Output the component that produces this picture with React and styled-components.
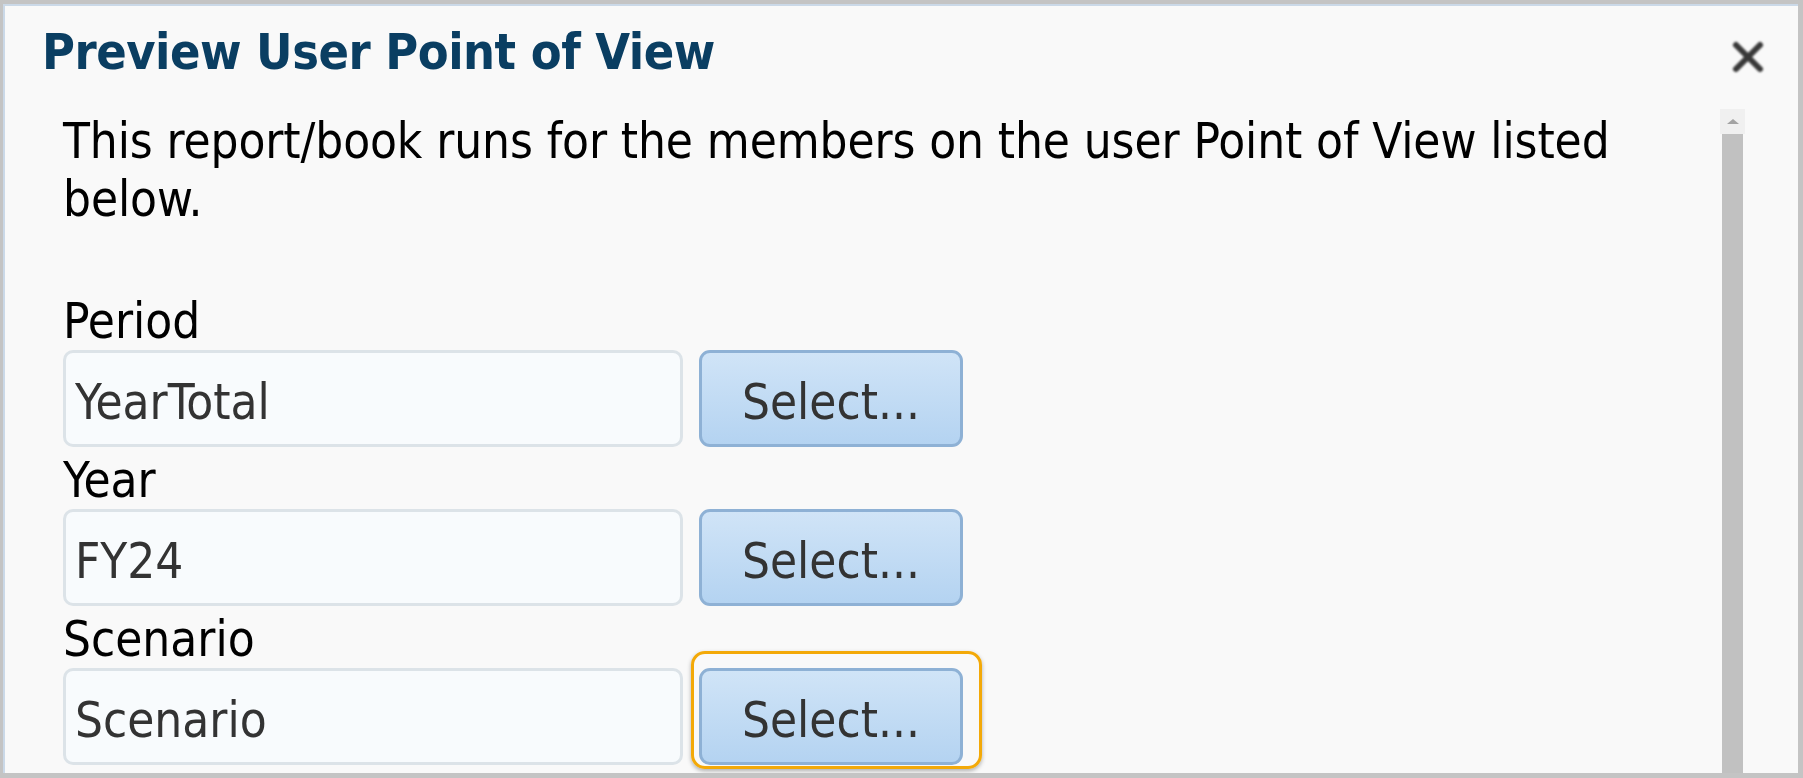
import React from "react";
import styled, { createGlobalStyle } from "styled-components";

const Global = createGlobalStyle`
  html, body { margin: 0; padding: 0; }
  body {
    width: 1803px;
    height: 778px;
    overflow: hidden;
    background: #c4c4c4;
    font-family: "DejaVu Sans Condensed", "DejaVu Sans", sans-serif;
    font-stretch: condensed;
  }
`;

const Frame = styled.div`
  box-sizing: border-box;
  width: 1803px;
  height: 778px;
  padding: 4px 5px 5px 3px;
  background: #c4c4c4;
  display: flex;
`;

const Dialog = styled.div`
  flex: 1;
  display: flex;
  flex-direction: column;
  background: #f9f9f9;
  border-top: 2px solid #cbd9e8;
  border-left: 2px solid #cbd9e8;
  overflow: hidden;
`;

const Header = styled.div`
  display: flex;
  justify-content: space-between;
  align-items: flex-start;
  height: 103px;
  flex-shrink: 0;
  padding: 16px 32px 0 37px;
  box-sizing: border-box;
`;

const Title = styled.h1`
  margin: 0;
  font-size: 50px;
  line-height: 60px;
  font-weight: bold;
  letter-spacing: -0.5px;
  color: #0a3e62;
`;

const Close = styled.button`
  margin-top: 17px;
  width: 36px;
  height: 36px;
  padding: 0;
  border: none;
  background: none;
  display: flex;
  svg { filter: blur(0.8px); }
`;

const Body = styled.div`
  flex: 1;
  min-height: 0;
  display: flex;
  overflow: hidden;
`;

const Content = styled.div`
  flex: 1;
  padding: 4px 20px 0 58px;
  overflow: hidden;
`;

const Intro = styled.p`
  margin: 0 0 65px;
  font-size: 49px;
  line-height: 58px;
  letter-spacing: -0.1px;
  color: #000;
`;

const Field = styled.div`
  margin-bottom: 6px;
`;

const Label = styled.div`
  font-size: 49px;
  line-height: 56px;
  color: #000;
`;

const Row = styled.div`
  display: flex;
  gap: 16px;
  height: 97px;
`;

const Input = styled.div`
  box-sizing: border-box;
  width: 620px;
  height: 97px;
  border: 3px solid #dce3e8;
  border-radius: 10px;
  background: #f8fbfd;
  padding: 8px 0 0 9px;
  display: flex;
  align-items: center;
  font-size: 49px;
  color: #333;
`;

const SelectButton = styled.button`
  position: relative;
  box-sizing: border-box;
  width: 264px;
  height: 97px;
  border: 3px solid #8eb1d5;
  border-radius: 11px;
  background: linear-gradient(#d0e4f7, #b4d3f1);
  font-family: inherit;
  font-stretch: condensed;
  font-size: 49px;
  color: #333;
  padding: 7px 0 0;
  ${(p) =>
    p.$focused &&
    `
    &::before {
      content: "";
      position: absolute;
      left: -11px;
      top: -20px;
      right: -22px;
      bottom: -7px;
      border: 3px solid #f3a908;
      border-radius: 14px;
      box-shadow: 0 2px 4px rgba(0,0,0,0.3);
      pointer-events: none;
    }
  `}
`;

const Scrollbar = styled.div`
  width: 25px;
  margin-right: 53px;
  display: flex;
  flex-direction: column;
  align-items: center;
`;

const ScrollUp = styled.div`
  width: 25px;
  height: 25px;
  background: #f0f0f0;
  display: flex;
  align-items: center;
  justify-content: center;
  &::after {
    content: "";
    border-left: 6px solid transparent;
    border-right: 6px solid transparent;
    border-bottom: 5px solid #a3a3a3;
  }
`;

const Thumb = styled.div`
  width: 21px;
  flex: 1;
  background: #c1c1c1;
`;

const fields = [
  { label: "Period", value: "YearTotal" },
  { label: "Year", value: "FY24" },
  { label: "Scenario", value: "Scenario", focused: true },
];

export default function App() {
  return (
    <>
      <Global />
      <Frame>
        <Dialog>
          <Header>
            <Title>Preview User Point of View</Title>
            <Close aria-label="Close">
              <svg width="36" height="36" viewBox="0 0 36 36">
                <path
                  d="M6 6 L30 30 M30 6 L6 30"
                  stroke="#383838"
                  strokeWidth="6"
                  strokeLinecap="round"
                />
              </svg>
            </Close>
          </Header>
          <Body>
            <Content>
              <Intro>
                This report/book runs for the members on the user Point of View
                listed below.
              </Intro>
              {fields.map((f) => (
                <Field key={f.label}>
                  <Label>{f.label}</Label>
                  <Row>
                    <Input>{f.value}</Input>
                    <SelectButton $focused={f.focused}>Select...</SelectButton>
                  </Row>
                </Field>
              ))}
            </Content>
            <Scrollbar>
              <ScrollUp />
              <Thumb />
            </Scrollbar>
          </Body>
        </Dialog>
      </Frame>
    </>
  );
}
